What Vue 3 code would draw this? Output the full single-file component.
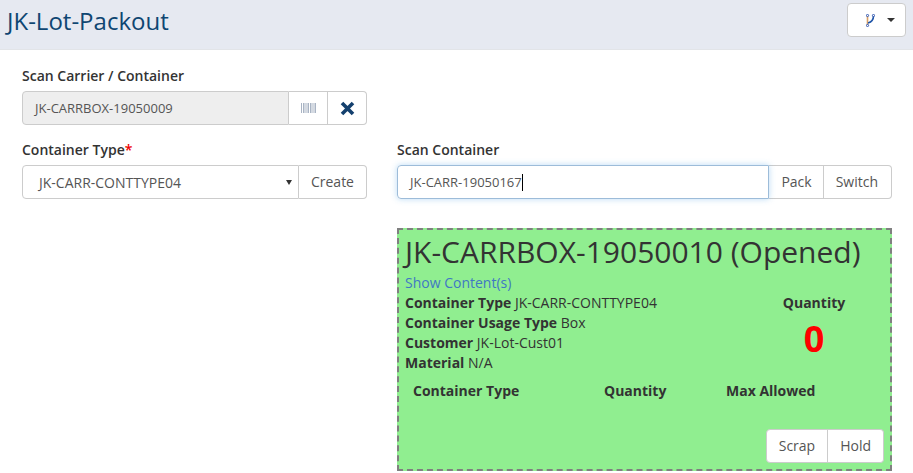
<script setup>
const info = [
  { label: "Container Type", value: "JK-CARR-CONTTYPE04" },
  { label: "Container Usage Type", value: "Box" },
  { label: "Customer", value: "JK-Lot-Cust01" },
  { label: "Material", value: "N/A" },
];
</script>

<template>
  <div class="page">
    <header class="topbar">
      <h1>JK-Lot-Packout</h1>
      <button class="branch-btn">
        <svg width="9" height="13" viewBox="0 0 9 13">
          <path d="M1.5 1.5V11.5" fill="none" stroke="#d9a066" stroke-width="1.6" />
          <path d="M2 9C5.5 8 7.5 6 7.5 2" fill="none" stroke="#1f55a8" stroke-width="1.6" />
          <circle cx="1.5" cy="1.5" r="1.1" fill="#fff" stroke="#2f55b0" stroke-width="1" />
          <circle cx="1.5" cy="11.5" r="1.1" fill="#fff" stroke="#2f55b0" stroke-width="1" />
          <circle cx="7.5" cy="1.5" r="1.1" fill="#fff" stroke="#2f55b0" stroke-width="1" />
        </svg>
        <span class="caret"></span>
      </button>
    </header>

    <main class="content">
      <div class="field carrier">
        <label>Scan Carrier / Container</label>
        <div class="group">
          <div class="control readonly">JK-CARRBOX-19050009</div>
          <button class="addon icon">
            <svg width="15" height="11" viewBox="0 0 15 11">
              <path d="M.5 0V10M2.5 0V10M4 0V10M6 0V10M7.5 0V10M9.5 0V10M11 0V10M13 0V10M14.5 0V10" stroke="#a9b4c4" stroke-width="1" />
            </svg>
          </button>
          <button class="addon icon">
            <svg width="15" height="15" viewBox="0 0 15 15">
              <path d="M2 2L13 13M13 2L2 13" stroke="#14406e" stroke-width="3.6" />
            </svg>
          </button>
        </div>
      </div>

      <div class="columns">
        <div class="field">
          <label>Container Type<span class="req">*</span></label>
          <div class="group">
            <div class="control select">
              JK-CARR-CONTTYPE04
              <span class="select-arrow"></span>
            </div>
            <button class="addon">Create</button>
          </div>
        </div>

        <div class="right">
          <div class="field">
            <label>Scan Container</label>
            <div class="group">
              <div class="control focused">JK-CARR-19050167<span class="cursor"></span></div>
              <button class="addon narrow">Pack</button>
              <button class="addon wide">Switch</button>
            </div>
          </div>

          <section class="box">
            <h2>JK-CARRBOX-19050010 (Opened)</h2>
            <a class="link">Show Content(s)</a>
            <div class="summary">
              <div class="info">
                <div v-for="row in info" :key="row.label" class="info-row">
                  <b>{{ row.label }}</b> {{ row.value }}
                </div>
              </div>
              <div class="qty">
                <b>Quantity</b>
                <div class="qty-num">0</div>
              </div>
            </div>
            <div class="table-head">
              <b>Container Type</b>
              <b>Quantity</b>
              <b>Max Allowed</b>
            </div>
            <div class="actions">
              <button class="addon">Scrap</button>
              <button class="addon">Hold</button>
            </div>
          </section>
        </div>
      </div>
    </main>
  </div>
</template>

<style>
html,
body {
  margin: 0;
  overflow: hidden;
}
</style>

<style scoped>
.page {
  width: 913px;
  height: 473px;
  overflow: hidden;
  background: #fff;
  font-family: "Open Sans", sans-serif;
  font-size: 14px;
  color: #333;
}
.topbar {
  height: 49px;
  background: #e6e9f1;
  border-bottom: 1px solid #e2e4e8;
  display: flex;
  justify-content: space-between;
  align-items: flex-start;
  padding: 0 7px 0 7px;
  box-sizing: content-box;
}
h1 {
  margin: 4px 0 0;
  font-size: 24px;
  line-height: 33px;
  font-weight: 400;
  color: #0f4672;
}
.branch-btn {
  width: 59px;
  height: 34px;
  margin-top: 3px;
  background: #fff;
  border: 1px solid #ccc;
  border-radius: 4px;
  display: flex;
  align-items: center;
  justify-content: center;
  gap: 12px;
  padding: 0 0 0 7px;
}
.caret {
  border-top: 4px solid #333;
  border-left: 4px solid transparent;
  border-right: 4px solid transparent;
}
.content {
  padding: 16px 21px 0 22px;
}
.field label {
  display: block;
  font-weight: 600;
  line-height: 20px;
  margin-bottom: 5px;
}
.carrier {
  width: 345px;
  margin-bottom: 15px;
}
.req {
  color: #e00;
}
.group {
  display: flex;
  height: 34px;
  box-sizing: border-box;
}
.control {
  flex: 1;
  min-width: 0;
  box-sizing: border-box;
  height: 34px;
  border: 1px solid #ccc;
  border-radius: 4px 0 0 4px;
  padding: 0 12px;
  line-height: 32px;
  font-size: 13px;
  color: #555;
  position: relative;
}
.readonly {
  background: #eee;
}
.select {
  padding-left: 16px;
  font-size: 14px;
  line-height: 33px;
}
.select-arrow {
  position: absolute;
  right: 6px;
  top: 14px;
  border-top: 5px solid #333;
  border-left: 3px solid transparent;
  border-right: 3px solid transparent;
}
.focused {
  border-color: #9dbcd9;
  box-shadow: 0 0 6px rgba(102, 175, 233, 0.45);
}
.cursor {
  display: inline-block;
  width: 1px;
  height: 17px;
  background: #000;
  vertical-align: -4px;
}
.addon {
  height: 34px;
  box-sizing: border-box;
  border: 1px solid #ccc;
  border-left: 0;
  background: #fff;
  padding: 0 12px 2px;
  font: 14px "Open Sans", sans-serif;
  color: #555;
  display: flex;
  align-items: center;
  justify-content: center;
}
.addon:last-child {
  border-radius: 0 4px 4px 0;
}
.narrow {
  padding: 0 11px 2px 12px;
}
.wide {
  padding: 0 13px 2px 12px;
}
.icon {
  width: 39px;
  padding: 0;
  flex: none;
}
.columns {
  display: grid;
  grid-template-columns: 345px 495px;
  gap: 30px;
}
.box {
  margin-top: 29px;
  height: 243px;
  box-sizing: border-box;
  background: #90ee90;
  border: 2px dashed #808080;
  padding: 2px 6px 0 6px;
  position: relative;
}
h2 {
  margin: 0;
  font-size: 30px;
  line-height: 40px;
  font-weight: 400;
}
.link {
  display: block;
  color: #3f78c4;
  line-height: 20px;
  margin-top: 1px;
}
.summary {
  display: flex;
  height: 80px;
}
.info {
  width: 338px;
  flex: none;
}
.info-row {
  line-height: 20px;
}
.qty {
  width: 142px;
  flex: none;
  text-align: center;
  line-height: 20px;
}
.qty-num {
  color: #f00;
  font-size: 36px;
  font-weight: 700;
  line-height: 52px;
}
.table-head {
  display: grid;
  grid-template-columns: 191px 122px 1fr;
  padding: 8px 8px 0;
  line-height: 20px;
}
.actions {
  position: absolute;
  right: 6px;
  bottom: 6px;
  display: flex;
}
.actions .addon:first-child {
  border-left: 1px solid #ccc;
  border-radius: 4px 0 0 4px;
}
</style>
